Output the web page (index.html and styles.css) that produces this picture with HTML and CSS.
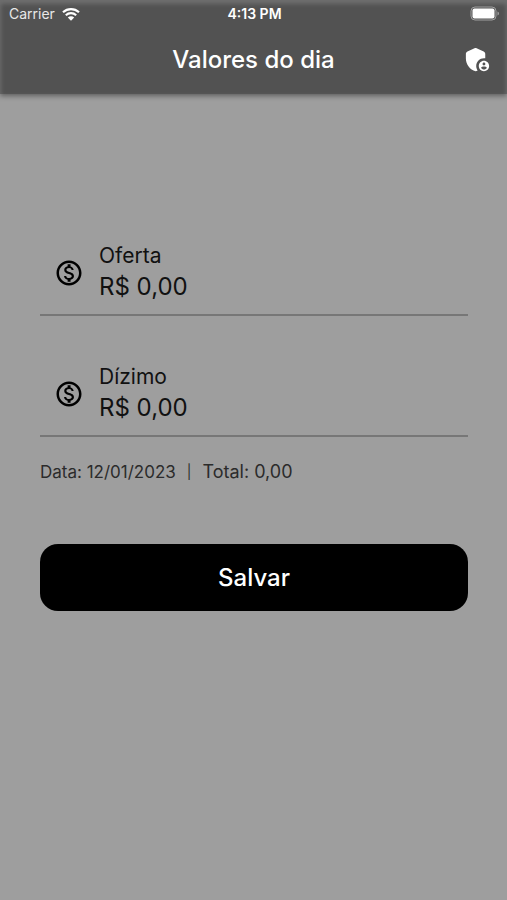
FILE: index.html
```html
<!DOCTYPE html>
<html lang="pt-BR">
<head>
  <meta charset="UTF-8">
  <meta name="viewport" content="width=device-width, initial-scale=1.0">
  <title>Valores do dia</title>
  <link rel="stylesheet" href="styles.css">
</head>
<body>

  <header class="app-header">
    <div class="status-bar">
      <div class="carrier">
        <span>Carrier</span>
        <svg class="wifi" viewBox="0 0 18 14" aria-hidden="true">
          <path d="M1 5.2C5.600 1 12.400 1 17 5.200M3.800 8.200c3-2.700 7.400-2.700 10.400 0" fill="none" stroke="#fff" stroke-width="2.200"/>
          <path d="M5.800 10.500c1.900-1.700 4.500-1.700 6.400 0L9 13.700z" fill="#fff"/>
        </svg>
      </div>
      <span class="time">4:13 PM</span>
      <svg class="battery" viewBox="0 0 30 15" aria-hidden="true">
        <rect x="1" y="1" width="25" height="13" rx="4" fill="none" stroke="#a0a0a0"/>
        <rect x="2.500" y="2.500" width="22" height="10" rx="2" fill="#fff"/>
        <path d="M27.500 5.500v4c2-.8 2-3.200 0-4z" fill="#a0a0a0"/>
      </svg>
    </div>
    <div class="toolbar">
      <h1>Valores do dia</h1>
      <button type="button" class="admin-button" aria-label="Administrador">
        <svg viewBox="0 0 24 24" aria-hidden="true">
          <path d="M17 11c.34 0 .67.04 1 .09V7.600c0-.8-.5-1.550-1.200-1.850l-5.500-2.400c-.5-.22-1.100-.22-1.600 0l-5.500 2.400C3.500 6.050 3 6.800 3 7.600v3.580c0 4.54 3.200 8.790 7.500 9.820.55-.13 1.080-.32 1.600-.55-.69-.98-1.100-2.170-1.100-3.450 0-3.310 2.690-6 6-6z"/>
          <path d="M17 13c-2.210 0-4 1.790-4 4s1.790 4 4 4 4-1.790 4-4-1.790-4-4-4zm0 1.380c.62 0 1.120.51 1.120 1.120s-.51 1.120-1.120 1.120-1.120-.51-1.120-1.120.5-1.120 1.120-1.120zm0 5.370c-.93 0-1.740-.46-2.240-1.170.05-.72 1.510-1.080 2.240-1.080s2.190.36 2.240 1.080c-.5.71-1.310 1.170-2.240 1.170z"/>
        </svg>
      </button>
    </div>
  </header>

  <main>
    <form class="form">
      <div class="field">
        <svg class="coin" viewBox="0 0 24 24" aria-hidden="true">
          <path d="M12 2C6.480 2 2 6.480 2 12s4.480 10 10 10 10-4.480 10-10S17.520 2 12 2zm0 18c-4.410 0-8-3.590-8-8s3.590-8 8-8 8 3.590 8 8-3.590 8-8 8zm.31-8.860c-1.770-.45-2.340-.94-2.340-1.670 0-.84.79-1.430 2.100-1.430 1.380 0 1.900.66 1.940 1.640h1.710c-.05-1.340-.87-2.570-2.490-2.970V5H10.900v1.690c-1.510.32-2.720 1.300-2.720 2.810 0 1.790 1.490 2.690 3.660 3.210 1.950.46 2.340 1.150 2.340 1.870 0 .53-.39 1.390-2.100 1.390-1.600 0-2.230-.72-2.320-1.640H8.040c.1 1.700 1.360 2.660 2.860 2.970V19h2.340v-1.670c1.520-.29 2.720-1.160 2.730-2.770-.01-2.200-1.900-2.960-3.660-3.420z"/>
        </svg>
        <div class="field-text">
          <label for="oferta">Oferta</label>
          <input type="text" id="oferta" value="R$ 0,00" inputmode="decimal">
        </div>
      </div>

      <div class="field">
        <svg class="coin" viewBox="0 0 24 24" aria-hidden="true">
          <path d="M12 2C6.480 2 2 6.480 2 12s4.480 10 10 10 10-4.480 10-10S17.520 2 12 2zm0 18c-4.410 0-8-3.590-8-8s3.590-8 8-8 8 3.590 8 8-3.590 8-8 8zm.31-8.860c-1.770-.45-2.340-.94-2.340-1.670 0-.84.79-1.430 2.100-1.430 1.380 0 1.900.66 1.940 1.640h1.710c-.05-1.340-.87-2.570-2.490-2.970V5H10.900v1.690c-1.510.32-2.720 1.300-2.720 2.810 0 1.790 1.490 2.690 3.660 3.210 1.950.46 2.340 1.150 2.340 1.870 0 .53-.39 1.390-2.100 1.390-1.600 0-2.230-.72-2.320-1.640H8.040c.1 1.700 1.360 2.660 2.860 2.970V19h2.340v-1.670c1.520-.29 2.720-1.160 2.730-2.770-.01-2.200-1.900-2.960-3.660-3.420z"/>
        </svg>
        <div class="field-text">
          <label for="dizimo">Dízimo</label>
          <input type="text" id="dizimo" value="R$ 0,00" inputmode="decimal">
        </div>
      </div>

      <p class="summary">
        <span>Data: 12/01/2023</span>
        <span class="divider">|</span>
        <span class="total">Total: 0,00</span>
      </p>

      <button type="button" class="save-button">Salvar</button>
    </form>
  </main>

</body>
</html>
```
FILE: styles.css
```css
* {
  box-sizing: border-box;
}
body {
  margin: 0;
  min-height: 100vh;
  background-color: #9e9e9e;
  color: #111;
  font-family: Inter, Roboto, sans-serif;
}

/* Header */
.app-header {
  background-color: #525252;
  color: #fff;
  box-shadow: inset 0 3px 4px 1px #6e6e6e, 0 2px 5px rgba(0, 0, 0, 0.4);
}
.status-bar {
  display: grid;
  grid-template-columns: 1fr auto 1fr;
  align-items: center;
  height: 27px;
  padding: 0 7px 0 9px;
  font-size: 14px;
}
.carrier {
  display: flex;
  align-items: center;
  gap: 7px;
  color: #e8e8e8;
}
.wifi {
  width: 18px;
  height: 14px;
}
.time {
  font-size: 14px;
  font-weight: 600;
}
.battery {
  width: 30px;
  height: 15px;
  justify-self: end;
}
.toolbar {
  display: grid;
  grid-template-columns: 1fr auto 1fr;
  align-items: center;
  height: 67px;
  padding: 0 14px 2px;
}
.toolbar h1 {
  grid-column: 2;
  margin: 0;
  font-size: 24px;
  font-weight: 500;
}
.admin-button {
  justify-self: end;
  display: flex;
  padding: 0;
  border: none;
  background: none;
  cursor: pointer;
}
.admin-button svg {
  width: 31px;
  height: 31px;
  fill: #fff;
}

/* Form */
.form {
  display: flex;
  flex-direction: column;
  padding: 137px 39px 40px 40px;
}
.field {
  display: flex;
  align-items: center;
  gap: 15px;
  height: 85px;
  margin-bottom: 36px;
  padding-left: 14px;
  border-bottom: 2px solid #777;
}
.coin {
  width: 30px;
  height: 30px;
}
.field-text {
  flex: 1;
  display: flex;
  flex-direction: column;
  padding-bottom: 2px;
}
label {
  font-size: 21px;
  line-height: 30px;
}
input {
  width: 100%;
  height: 32px;
  padding: 0;
  border: none;
  outline: none;
  background: none;
  color: #111;
  font-family: inherit;
  font-size: 24px;
}
.summary {
  display: flex;
  gap: 11px;
  margin: -13px 0 60px;
  color: #2b2b2b;
  font-size: 17px;
  line-height: 24px;
}
.divider {
  font-size: 14px;
}
.total {
  font-size: 18px;
}
.save-button {
  height: 67px;
  border: none;
  border-radius: 18px;
  background-color: #000;
  color: #fff;
  font-family: inherit;
  font-size: 24px;
  font-weight: 500;
  cursor: pointer;
}
```
